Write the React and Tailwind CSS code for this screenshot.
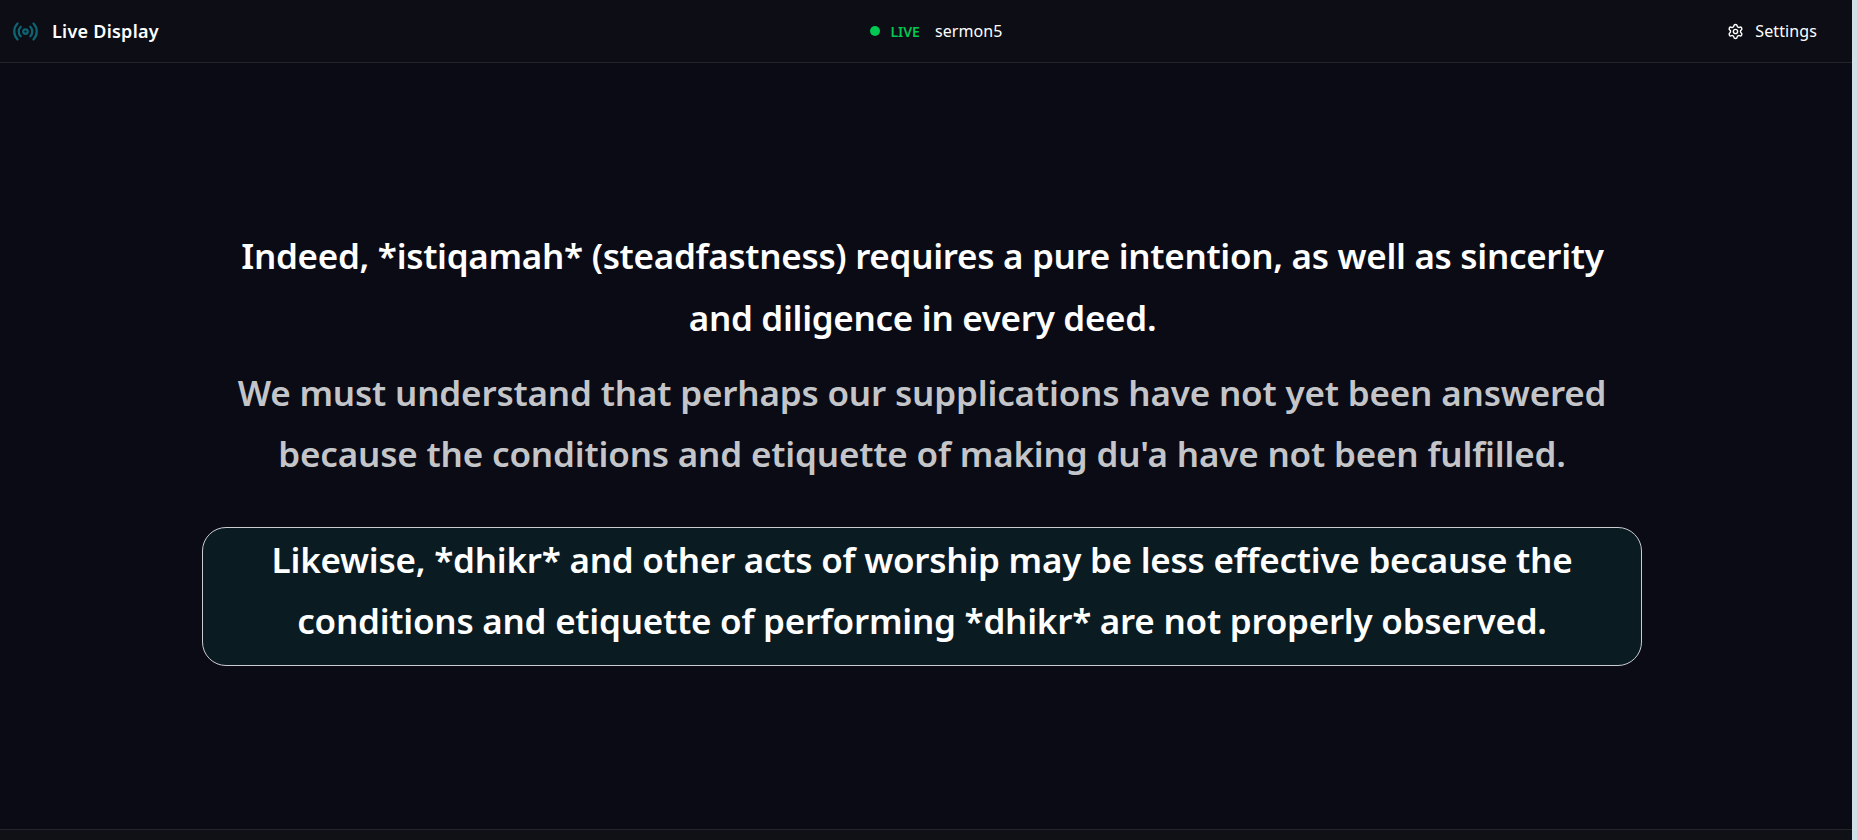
import React from "react";
import { Radio, Settings } from "lucide-react";

export default function App() {
  return (
    <div className="flex h-[840px] w-full overflow-hidden bg-[#cfe0e6] font-['Noto_Sans',sans-serif]">
      <div className="flex min-w-0 flex-1 flex-col rounded-tr-lg bg-[#0a0b14] text-white">
        <header className="flex h-[63px] shrink-0 items-center justify-between border-b border-[#24252a] bg-[#0c0d15] pl-[12px] pr-[35px]">
          <div className="flex w-[344px] items-center gap-[13px]">
            <Radio className="h-[27px] w-[27px] text-[#0e6473]" strokeWidth={2} />
            <span className="text-[18px] font-semibold tracking-[0.25px]">Live Display</span>
          </div>
          <div className="flex items-center">
            <span className="h-[10px] w-[10px] rounded-full bg-[#00c853]" />
            <span className="ml-[10px] text-[14px] font-semibold text-[#00c853]">LIVE</span>
            <span className="ml-[15px] text-[16px] tracking-[0.1px]">sermon5</span>
          </div>
          <div className="flex w-[300px] items-center justify-end gap-[11px]">
            <Settings className="h-[17px] w-[17px]" />
            <span className="text-[16px] tracking-[0.1px]">Settings</span>
          </div>
        </header>
        <main className="flex flex-1 flex-col items-center justify-center pb-[1px] pr-[9px]">
          <p className="w-[1440px] pl-[34px] pr-[32px] text-center text-[35px] font-semibold leading-[61.2px] tracking-[-0.3px]">
            Indeed, *istiqamah* (steadfastness) requires a pure intention, as well as sincerity and diligence in every deed.
          </p>
          <p className="mt-[14px] w-[1440px] pl-[33px] pr-[32px] text-center text-[35px] font-semibold leading-[61.2px] tracking-[-0.17px] text-[#c4c5c9]">
            We must understand that perhaps our supplications have not yet been answered because the conditions and etiquette of making du'a have not been fulfilled.
          </p>
          <p className="mt-[43px] w-[1440px] rounded-[24px] border border-[#c9cdd0] bg-[#0b1b22] pb-[13px] pl-[33px] pr-[32px] pt-[1px] text-center text-[35px] font-semibold leading-[61.2px] tracking-[-0.24px]">
            Likewise, *dhikr* and other acts of worship may be less effective because the conditions and etiquette of performing *dhikr* are not properly observed.
          </p>
        </main>
        <footer className="h-[11px] shrink-0 border-t border-[#24252a] bg-[#101116]" />
      </div>
      <div className="w-[5px] shrink-0" />
    </div>
  );
}
